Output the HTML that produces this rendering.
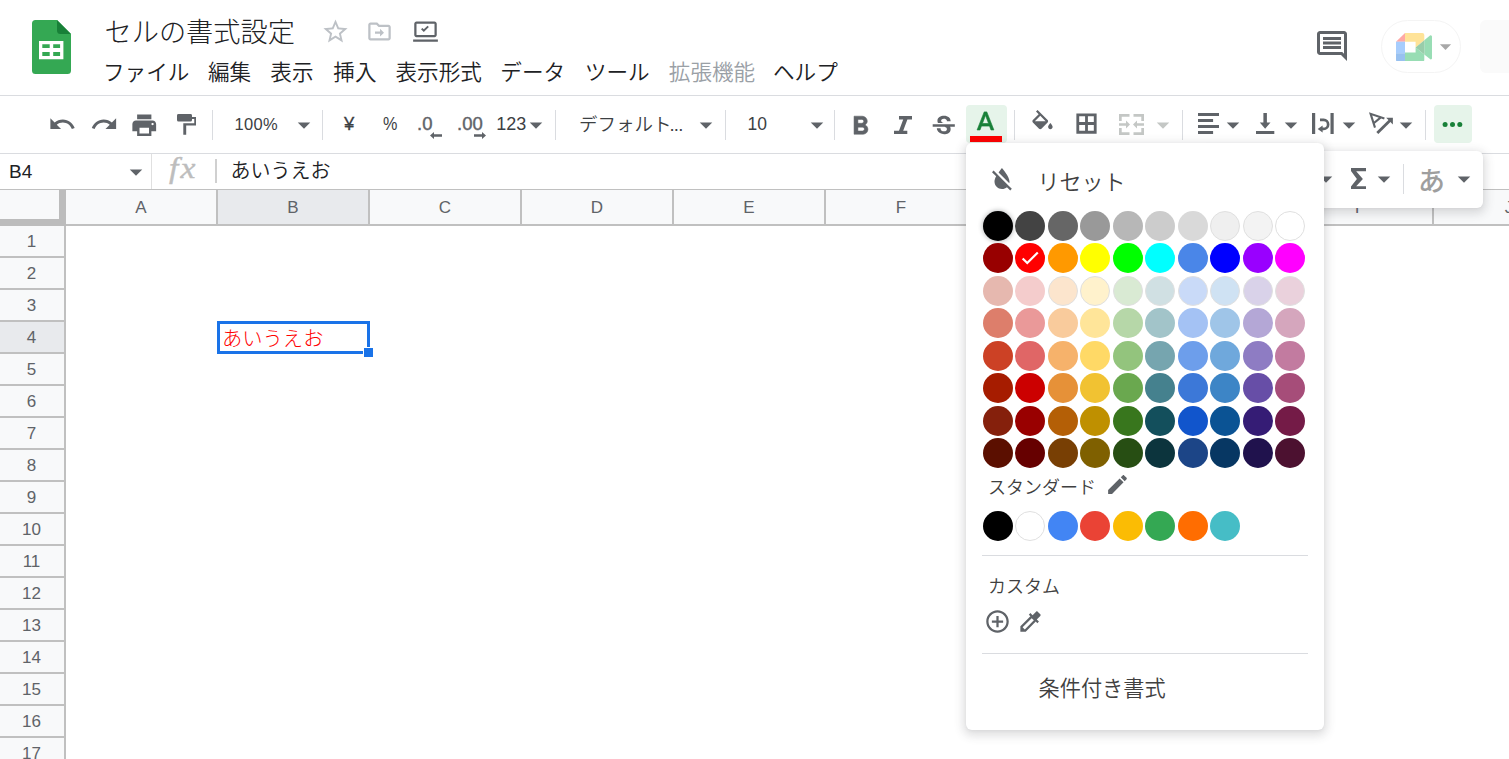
<!DOCTYPE html>
<html lang="ja"><head><meta charset="utf-8"><title>セルの書式設定</title>
<style>
html,body{margin:0;padding:0}
body{width:1509px;height:759px;overflow:hidden;position:relative;background:#fff;font-family:"Liberation Sans","Noto Sans CJK JP",sans-serif;color:#202124}
.abs,.ic,.t{position:absolute}
.t{white-space:nowrap;line-height:1}
.sep{position:absolute;width:1px;background:#dadce0}
.colh{position:absolute;top:190px;height:34px;background:#f8f9fa;border-right:2px solid #c0c0c0;box-sizing:border-box;text-align:center;font-size:17px;line-height:35px;color:#5f6368}
.rowh{position:absolute;left:0;width:65px;padding-right:2px;background:#f8f9fa;border-bottom:2px solid #c0c0c0;box-sizing:border-box;text-align:center;font-size:17px;color:#5f6368}
.sw{position:absolute;width:30px;height:30px;border-radius:50%;box-sizing:border-box}
</style></head><body>

<!-- header -->
<svg class="ic" style="left:32px;top:20px" width="39" height="54" viewBox="0 0 39 54">
<path d="M3.5 0H25L39 14V50.5A3.5 3.5 0 0 1 35.5 54H3.5A3.5 3.5 0 0 1 0 50.500V3.5A3.5 3.5 0 0 1 3.5 0z" fill="#34a853"/>
<path d="M25 0L39 14H28.5A3.5 3.5 0 0 1 25 10.5z" fill="#188038"/>
<path d="M7 20.900v18.300h24.400V20.900zm3.300 3.300h7.400v3.900h-7.400zm10.900 0h6.900v3.900h-6.900zm-10.900 7.900h7.400v3.900h-7.400zm10.900 0h6.900v3.900h-6.900z" fill="#fff"/>
</svg>
<div class="t" style="left:104.500px;top:19px;font-size:27.200px;color:#202124;font-weight:300">セルの書式設定</div>
<svg class="ic" style="left:321px;top:17px" width="29" height="29" viewBox="0 0 24 24" fill="#bdc1c6" ><path d="M22 9.24l-7.19-.62L12 2 9.19 8.63 2 9.24l5.46 4.73L5.82 21 12 17.27 18.18 21l-1.63-7.03L22 9.24zM12 15.4l-3.76 2.27 1-4.28-3.32-2.88 4.38-.38L12 6.1l1.71 4.04 4.38.38-3.32 2.88 1 4.28L12 15.4z"/></svg>
<svg class="ic" style="left:366px;top:18px" width="27" height="27" viewBox="0 0 24 24" fill="#bdc1c6"><path d="M20 6h-8l-2-2H4c-1.100 0-2 .900-2 2v12c0 1.100.900 2 2 2h16c1.100 0 2-.900 2-2V8c0-1.100-.900-2-2-2zm0 12H4V6h5.170l2 2H20v10zm-7.500-1.500l3.500-3.500-3.500-3.500v2.500H8v2h4.500v2.500z"/></svg>
<svg class="ic" style="left:412px;top:18px" width="27" height="27" viewBox="0 0 24 24" fill="#5f6368"><path d="M1 19h22v2H1zM20 3H4c-1.100 0-2 .900-2 2v10c0 1.100.900 2 2 2h16c1.100 0 2-.900 2-2V5c0-1.100-.900-2-2-2zm0 12H4V5h16v10zm-9.500-2.500l-2.500-2.500 1.200-1.200 1.300 1.300 3.300-3.300 1.200 1.200z"/></svg>
<div class="t" style="left:103px;top:62px;font-size:21.600px;color:#202124;font-weight:350">ファイル</div>
<div class="t" style="left:208px;top:62px;font-size:21.600px;color:#202124;font-weight:350">編集</div>
<div class="t" style="left:270.3px;top:62px;font-size:21.600px;color:#202124;font-weight:350">表示</div>
<div class="t" style="left:333.3px;top:62px;font-size:21.600px;color:#202124;font-weight:350">挿入</div>
<div class="t" style="left:395.5px;top:62px;font-size:21.600px;color:#202124;font-weight:350">表示形式</div>
<div class="t" style="left:500.3px;top:62px;font-size:21.600px;color:#202124;font-weight:350">データ</div>
<div class="t" style="left:584.8px;top:62px;font-size:21.600px;color:#202124;font-weight:350">ツール</div>
<div class="t" style="left:668.8px;top:62px;font-size:21.600px;color:#9aa0a6;font-weight:350">拡張機能</div>
<div class="t" style="left:773px;top:62px;font-size:21.600px;color:#202124;font-weight:350">ヘルプ</div>
<svg class="ic" style="left:1314px;top:28px" width="36" height="36" viewBox="0 0 24 24" fill="#5f6368" ><path d="M20 4v13.17L18.83 16H4V4h16m0-2H4c-1.1 0-2 .9-2 2v12c0 1.1.9 2 2 2h14l4 4V4c0-1.1-.9-2-2-2zm-2 10H6v2h12v-2zm0-3H6v2h12V9zm0-3H6v2h12V6z"/></svg>
<div class="abs" style="left:1381px;top:20px;width:80px;height:53px;border-radius:27px;border:1px solid #f4f4f4;box-sizing:border-box;background:#fff"></div>
<svg class="ic" style="left:1396px;top:32.600px" width="36" height="28.700" viewBox="0 0 36 28.700" opacity="0.4">
<path d="M0 8.700L9 0v8.700z" fill="#ff2820"/>
<path d="M9 0h17.300a2 2 0 0 1 2 2v5.300L19.600 14.400V8.700H9z" fill="#ffba00"/>
<path d="M0 8.700h9v11.600H0z" fill="#2684fc"/>
<path d="M0 20.300h9v8.400H2a2 2 0 0 1-2-2z" fill="#0066da"/>
<path d="M9 19.600h10.600v-5.200l8.700 7.100v5.200a2 2 0 0 1-2 2H9z" fill="#00ac47"/>
<path d="M28.300 7.300l5.700-4.700a1.200 1.200 0 0 1 2 .900v21.700a1.200 1.200 0 0 1-2 .900l-5.700-4.700z" fill="#00ac47"/>
<path d="M19.600 14.400l8.700-7.100v14.200z" fill="#00832d"/>
</svg>
<svg class="ic" style="left:1431.6px;top:32.7375px" width="27" height="27" viewBox="0 0 24 24" fill="#a8a8a8" ><path d="M7 10l5 5 5-5z"/></svg>
<div class="abs" style="left:1479.500px;top:20px;width:40px;height:53px;border-radius:6px;background:#fafafa"></div>
<div class="abs" style="left:0;top:95px;width:1509px;height:1px;background:#dadce0"></div>
<!-- toolbar -->
<svg class="ic" style="left:47.9px;top:110.3px" width="28.5" height="28.5" viewBox="0 0 24 24" fill="#5f6368" ><path d="M12.5 8c-2.65 0-5.05.99-6.9 2.6L2 7v9h9l-3.62-3.62c1.39-1.16 3.16-1.88 5.12-1.88 3.54 0 6.55 2.31 7.6 5.5l2.37-.78C21.08 11.03 17.15 8 12.5 8z"/></svg>
<svg class="ic" style="left:89.5px;top:110.3px" width="28.5" height="28.5" viewBox="0 0 24 24" fill="#5f6368" ><path d="M18.4 10.6C16.55 8.99 14.15 8 11.5 8c-4.65 0-8.58 3.03-9.96 7.22L3.9 16c1.05-3.19 4.05-5.5 7.6-5.5 1.95 0 3.73.72 5.12 1.88L13 16h9V7l-3.6 3.6z"/></svg>
<svg class="ic" style="left:130.4px;top:110.6px" width="28.5" height="28.5" viewBox="0 0 24 24" fill="#5f6368" ><path d="M19 8H5c-1.66 0-3 1.34-3 3v6h4v4h12v-4h4v-6c0-1.66-1.34-3-3-3zm-3 11H8v-5h8v5zm3-7c-.55 0-1-.45-1-1s.45-1 1-1 1 .45 1 1-.45 1-1 1zm-1-9H6v4h12V3z"/></svg>
<svg class="ic" style="left:176.600px;top:114.100px" width="19.500" height="20.800" viewBox="0 0 19.500 20.800" fill="#5f6368"><path d="M1.500 0h12a1.500 1.500 0 0 1 1.500 1.500v4.400a1.500 1.500 0 0 1-1.500 1.500h-12a1.500 1.500 0 0 1-1.500-1.500v-4.400a1.500 1.500 0 0 1 1.500-1.500zM15 3h4.450v8.600H9.200v9.200H6.300V9.200h10.950V5H15z"/></svg>
<div class="sep" style="left:212px;top:110px;height:30px"></div>
<div class="sep" style="left:322px;top:110px;height:30px"></div>
<div class="sep" style="left:555px;top:110px;height:30px"></div>
<div class="sep" style="left:725px;top:110px;height:30px"></div>
<div class="sep" style="left:834px;top:110px;height:30px"></div>
<div class="sep" style="left:1014px;top:110px;height:30px"></div>
<div class="sep" style="left:1182px;top:110px;height:30px"></div>
<div class="sep" style="left:1425px;top:110px;height:30px"></div>
<div class="t" style="left:234.5px;top:116.3px;font-size:16.5px;color:#3c4043;letter-spacing:0.3px">100%</div>
<svg class="ic" style="left:289.0px;top:109.575px" width="30" height="30" viewBox="0 0 24 24" fill="#5f6368" ><path d="M7 10l5 5 5-5z"/></svg>
<div class="t" style="left:344px;top:115.1px;font-size:18.5px;color:#3c4043;-webkit-text-stroke:0.3px #3c4043">¥</div>
<div class="t" style="left:382.5px;top:114.8px;font-size:18px;color:#3c4043;transform:scaleX(0.9);transform-origin:0 0">%</div>
<div class="t" style="left:417px;top:115.1px;font-size:18.5px;color:#5f6368;-webkit-text-stroke:0.4px #5f6368">.0</div>
<div class="t" style="left:457px;top:115.1px;font-size:18.5px;color:#5f6368;-webkit-text-stroke:0.4px #5f6368">.00</div>
<svg class="ic" style="left:430px;top:131.800px" width="12" height="7" viewBox="0 0 12 7" fill="#5f6368"><path d="M4 0L0 3.500 4 7V4.700H12V2.300H4z"/></svg>
<svg class="ic" style="left:473.500px;top:131.800px" width="12" height="7" viewBox="0 0 12 7" fill="#5f6368"><path d="M8 0L12 3.500 8 7V4.700H0V2.300H8z"/></svg>
<div class="t" style="left:496.3px;top:114.8px;font-size:18px;color:#3c4043;">123</div>
<svg class="ic" style="left:521.0px;top:109.575px" width="30" height="30" viewBox="0 0 24 24" fill="#5f6368" ><path d="M7 10l5 5 5-5z"/></svg>
<div class="t" style="left:579px;top:115.5px;font-size:18.5px;color:#3c4043;font-weight:350">デフォルト<span style="letter-spacing:-0.8px;margin-left:-2px">...</span></div>
<svg class="ic" style="left:690.5px;top:109.575px" width="30" height="30" viewBox="0 0 24 24" fill="#5f6368" ><path d="M7 10l5 5 5-5z"/></svg>
<div class="t" style="left:747.5px;top:116px;font-size:17.5px;color:#3c4043;">10</div>
<svg class="ic" style="left:802.0px;top:109.575px" width="30" height="30" viewBox="0 0 24 24" fill="#5f6368" ><path d="M7 10l5 5 5-5z"/></svg>
<svg class="ic" style="left:845.4px;top:110.6px" width="31" height="31" viewBox="0 0 24 24" fill="#5f6368" stroke="#5f6368" stroke-width="0.4"><path d="M15.6 10.79c.97-.67 1.65-1.77 1.65-2.79 0-2.26-1.75-4-4-4H7v14h7.04c2.09 0 3.71-1.7 3.71-3.79 0-1.52-.86-2.82-2.15-3.42zM10 6.5h3c.83 0 1.5.67 1.5 1.5s-.67 1.5-1.5 1.5h-3v-3zm3.5 9H10v-3h3.5c.83 0 1.5.67 1.5 1.5s-.67 1.5-1.5 1.5z"/></svg>
<svg class="ic" style="left:893.600px;top:115.700px" width="18.300" height="18.300" viewBox="0 0 18.300 18.300" fill="#5f6368"><path d="M5 0H18.300V3.500H13.400L9.200 14.800H13.300V18.300H0V14.800H5L9.200 3.500H5z"/></svg>
<svg class="ic" style="left:929.2px;top:112.4px" width="29.5" height="29.5" viewBox="0 0 24 24" fill="#5f6368" ><path d="M6.85 7.08C6.85 4.37 9.45 3 12.24 3c1.64 0 3 .49 3.9 1.28.77.65 1.46 1.73 1.46 3.24h-3.01c0-.31-.05-.59-.15-.85-.29-.86-1.2-1.28-2.25-1.28-1.86 0-2.34 1.02-2.34 1.7 0 .48.25.88.74 1.21.38.25.77.48 1.41.7H7.39c-.21-.34-.54-.89-.54-1.92zM21 12v-2H3v2h9.62c1.15.45 1.96.75 1.96 1.97 0 1-.81 1.67-2.28 1.67-1.54 0-2.93-.54-2.93-2.51H6.4c0 .55.08 1.13.24 1.58.81 2.29 3.29 3.3 5.67 3.3 2.27 0 5.3-.89 5.3-4.05 0-.3-.01-1.16-.48-1.94H21V12z"/></svg>
<div class="abs" style="left:966px;top:105px;width:41px;height:38px;border-radius:4px;background:#e6f4ea"></div>
<svg class="ic" style="left:969.9px;top:107.9px" width="31" height="31" viewBox="0 0 24 24" fill="#188038" stroke="#188038" stroke-width="0.5"><path d="M11 3L5.5 17h2.25l1.12-3h6.25l1.12 3h2.25L13 3h-2zm-1.38 9L12 5.67 14.38 12H9.62z"/></svg>
<div class="abs" style="left:970px;top:136px;width:32px;height:6px;background:#ff0000"></div>
<svg class="ic" style="left:1029px;top:110px" width="27" height="27" viewBox="0 0 24 24" fill="#5f6368" ><path d="M16.56 8.94L7.62 0 6.21 1.41l2.38 2.38-5.15 5.15c-.59.59-.59 1.54 0 2.12l5.5 5.5c.29.29.68.44 1.06.44s.77-.15 1.06-.44l5.5-5.5c.59-.58.59-1.53 0-2.12zM5.21 10L10 5.21 14.79 10H5.21zM19 11.5s-2 2.17-2 3.5c0 1.1.9 2 2 2s2-.9 2-2c0-1.33-2-3.5-2-3.5z"/></svg>
<svg class="ic" style="left:1073px;top:110px" width="27" height="27" viewBox="0 0 24 24" fill="#5f6368"><path d="M3 3v18h18V3H3zm7.750 15.500H5.500v-5.250h5.250zm0-7.750H5.500V5.500h5.250zm7.750 7.750h-5.250v-5.250h5.250zm0-7.750h-5.250V5.500h5.250z"/></svg>
<svg class="ic" style="left:1119px;top:113.800px" width="25" height="21" viewBox="0 0 25 21" fill="#c4c7c5"><path d="M0 0h10.500v2.700H2.700v4.300H0zM14.500 0H25v7h-2.700V2.700h-7.800zM0 21h10.500v-2.700H2.700V14H0zM14.500 21H25v-7h-2.700v4.300h-7.800zM0 9.300h7V6.500l4 4-4 4v-2.800H0zM25 9.300h-7V6.500l-4 4 4 4v-2.800h7z"/></svg>
<svg class="ic" style="left:1148.3px;top:109.575px" width="30" height="30" viewBox="0 0 24 24" fill="#c4c7c5" ><path d="M7 10l5 5 5-5z"/></svg>
<svg class="ic" style="left:1197.500px;top:113px" width="21.200" height="21.200" viewBox="0 0 21.200 21.200" fill="#5f6368"><path d="M0 0h21.200v3.100H0zM0 6h15.100v3.100H0zM0 12h21.200v3.100H0zM0 18.100h15.100v3.100H0z"/></svg>
<svg class="ic" style="left:1218.4px;top:109.575px" width="30" height="30" viewBox="0 0 24 24" fill="#5f6368" ><path d="M7 10l5 5 5-5z"/></svg>
<svg class="ic" style="left:1256.300px;top:113px" width="18.300" height="21.300" viewBox="0 0 18.300 21.300" fill="#5f6368"><path d="M7.400 0h3.500v9.600h3.600l-5.350 6.100-5.350-6.100h3.600zM0 18.100h18.300v3.200H0z"/></svg>
<svg class="ic" style="left:1276.0px;top:109.575px" width="30" height="30" viewBox="0 0 24 24" fill="#5f6368" ><path d="M7 10l5 5 5-5z"/></svg>
<svg class="ic" style="left:1312.400px;top:112.900px" width="21.700" height="21" viewBox="0 0 21.700 21" fill="#5f6368"><path d="M0 0h3.200v21H0zM18.500 0h3.200v21h-3.200z"/><path d="M8 6.900H11.650a4.500 4.500 0 0 1 0 9H10" fill="none" stroke="#5f6368" stroke-width="2.700"/><path d="M5.700 15.900L10.600 12.400v7z"/></svg>
<svg class="ic" style="left:1333.5px;top:109.575px" width="30" height="30" viewBox="0 0 24 24" fill="#5f6368" ><path d="M7 10l5 5 5-5z"/></svg>
<svg class="ic" style="left:1360px;top:105px" width="60" height="35" viewBox="0 0 60 35" fill="#5f6368"><path d="M15 22.600L10.600 8.800 24.400 13.400M13.700 18.200L20.800 12.400" fill="none" stroke="#5f6368" stroke-width="2.100"/><path d="M17.300 28.100L31 14.400" fill="none" stroke="#5f6368" stroke-width="2.800"/><path d="M26.200 12.700h6.700v6.700z"/></svg>
<svg class="ic" style="left:1391.2px;top:109.575px" width="30" height="30" viewBox="0 0 24 24" fill="#5f6368" ><path d="M7 10l5 5 5-5z"/></svg>
<div class="abs" style="left:1434px;top:105px;width:38px;height:38px;border-radius:4px;background:#e6f4ea"></div>
<svg class="ic" style="left:1434px;top:105px" width="38" height="38" viewBox="0 0 38 38" fill="#188038"><circle cx="11.100" cy="19.600" r="2.500"/><circle cx="18.500" cy="19.600" r="2.500"/><circle cx="25.800" cy="19.600" r="2.500"/></svg>
<div class="abs" style="left:0;top:153px;width:1509px;height:1px;background:#dadce0"></div>
<!-- formula bar -->
<div class="t" style="left:9px;top:162px;font-size:19px;color:#202124;">B4</div>
<svg class="ic" style="left:121.4px;top:156.975px" width="30" height="30" viewBox="0 0 24 24" fill="#5f6368" ><path d="M7 10l5 5 5-5z"/></svg>
<div class="sep" style="left:151px;top:154px;height:35px;background:#e0e0e0"></div>
<div class="t" style="left:168.500px;top:153px;font-family:'Liberation Serif',serif;font-style:italic;font-size:30px;letter-spacing:2px;color:#bdbdbd;-webkit-text-stroke:0.4px #bdbdbd;transform:scaleX(1.12);transform-origin:0 0">fx</div>
<div class="sep" style="left:215px;top:159px;height:24px;width:2px;background:#d0d0d0"></div>
<div class="t" style="left:230.5px;top:161px;font-size:20px;color:#202124;font-weight:350">あいうえお</div>
<div class="abs" style="left:0;top:189px;width:1509px;height:1px;background:#c0c0c0"></div>
<!-- grid -->
<div class="abs" style="left:0;top:190px;width:1509px;height:34px;background:#f8f9fa"></div>
<div class="colh" style="left:66px;width:152px">A</div>
<div class="colh" style="left:218px;width:152px;background:#e8eaed">B</div>
<div class="colh" style="left:370px;width:152px">C</div>
<div class="colh" style="left:522px;width:152px">D</div>
<div class="colh" style="left:674px;width:152px">E</div>
<div class="colh" style="left:826px;width:152px">F</div>
<div class="colh" style="left:978px;width:152px">G</div>
<div class="colh" style="left:1130px;width:152px">H</div>
<div class="colh" style="left:1282px;width:152px">I</div>
<div class="colh" style="left:1434px;width:152px">J</div>
<div class="abs" style="left:0;top:224px;width:1509px;height:2px;background:#c0c0c0"></div>
<div class="abs" style="left:0;top:190px;width:66px;height:36px;background:#f8f9fa;border-right:7px solid #bcbcbc;border-bottom:7px solid #bcbcbc;box-sizing:border-box"></div>
<div class="rowh" style="top:226px;height:32px;line-height:31px">1</div>
<div class="rowh" style="top:258px;height:32px;line-height:31px">2</div>
<div class="rowh" style="top:290px;height:32px;line-height:31px">3</div>
<div class="rowh" style="top:322px;height:32px;line-height:31px;background:#e8eaed">4</div>
<div class="rowh" style="top:354px;height:32px;line-height:31px">5</div>
<div class="rowh" style="top:386px;height:32px;line-height:31px">6</div>
<div class="rowh" style="top:418px;height:32px;line-height:31px">7</div>
<div class="rowh" style="top:450px;height:32px;line-height:31px">8</div>
<div class="rowh" style="top:482px;height:32px;line-height:31px">9</div>
<div class="rowh" style="top:514px;height:32px;line-height:31px">10</div>
<div class="rowh" style="top:546px;height:32px;line-height:31px">11</div>
<div class="rowh" style="top:578px;height:32px;line-height:31px">12</div>
<div class="rowh" style="top:610px;height:32px;line-height:31px">13</div>
<div class="rowh" style="top:642px;height:32px;line-height:31px">14</div>
<div class="rowh" style="top:674px;height:32px;line-height:31px">15</div>
<div class="rowh" style="top:706px;height:32px;line-height:31px">16</div>
<div class="rowh" style="top:738px;height:32px;line-height:31px">17</div>
<div class="abs" style="left:64px;top:226px;width:2px;height:540px;background:#c0c0c0"></div>
<div class="abs" style="left:217px;top:321px;width:153px;height:33px;border:3px solid #1a73e8;box-sizing:border-box"></div>
<div class="t" style="left:222px;top:329px;font-size:20.300px;color:#ff0000;font-weight:300">あいうえお</div>
<div class="abs" style="left:363px;top:347px;width:10px;height:10px;background:#1a73e8;border:1px solid #fff;border-right:0;border-bottom:0;box-sizing:border-box"></div>
<!-- overflow toolbar -->
<div class="abs" style="left:1200px;top:151px;width:282.500px;height:57px;border-radius:6px;background:#fff;box-shadow:0 3px 10px 3px rgba(60,64,67,.16),0 1px 3px rgba(60,64,67,.06)"></div>
<svg class="ic" style="left:1311.4px;top:163.975px" width="30" height="30" viewBox="0 0 24 24" fill="#5f6368" ><path d="M7 10l5 5 5-5z"/></svg>
<svg class="ic" style="left:1351px;top:167.500px" width="15.100" height="21.400" viewBox="0 0 15.100 21.400" fill="#5f6368"><path d="M0 0H15.100V3.200H5.200L11.900 10.900 5.200 18.200H15.100V21.400H0V18.400L5.900 10.900 0 3z"/></svg>
<svg class="ic" style="left:1368.9px;top:163.975px" width="30" height="30" viewBox="0 0 24 24" fill="#5f6368" ><path d="M7 10l5 5 5-5z"/></svg>
<div class="sep" style="left:1403px;top:164px;height:30px"></div>
<div class="t" style="left:1418px;top:168.700px;font-size:27px;color:#9e9e9e;font-weight:500">あ</div>
<svg class="ic" style="left:1448.5px;top:163.975px" width="30" height="30" viewBox="0 0 24 24" fill="#5f6368" ><path d="M7 10l5 5 5-5z"/></svg>
<!-- colour picker -->
<div class="abs" style="left:966px;top:143px;width:358px;height:587px;border-radius:6px;background:#fff;box-shadow:0 3px 10px 3px rgba(60,64,67,.16),0 1px 3px rgba(60,64,67,.06)"></div>
<svg class="ic" style="left:987px;top:164.3px" width="30" height="30" viewBox="0 0 24 24" fill="#5f6368" ><path d="M18 14c0-4-6-10.8-6-10.8s-1.33 1.51-2.73 3.52l8.59 8.59c.09-.42.14-.86.14-1.31zm-.88 3.12L12.5 12.5 5.27 5.27 4 6.55l3.32 3.32C6.55 11.32 6 12.79 6 14c0 3.31 2.69 6 6 6 1.52 0 2.9-.57 3.96-1.5l2.63 2.63 1.27-1.27-2.74-2.74z"/></svg>
<div class="t" style="left:1037.5px;top:172px;font-size:22px;color:#404040;font-weight:350">リセット</div>
<div class="sw" style="left:983px;top:211px;background:#000000;box-shadow:0 0 4px 1px rgba(60,64,67,.3)"></div>
<div class="sw" style="left:1015px;top:211px;background:#434343"></div>
<div class="sw" style="left:1048px;top:211px;background:#666666"></div>
<div class="sw" style="left:1080px;top:211px;background:#999999"></div>
<div class="sw" style="left:1113px;top:211px;background:#b7b7b7"></div>
<div class="sw" style="left:1145px;top:211px;background:#cccccc"></div>
<div class="sw" style="left:1178px;top:211px;background:#d9d9d9"></div>
<div class="sw" style="left:1210px;top:211px;background:#efefef;border:1px solid #e0e0e0"></div>
<div class="sw" style="left:1243px;top:211px;background:#f3f3f3;border:1px solid #e0e0e0"></div>
<div class="sw" style="left:1275px;top:211px;background:#ffffff;border:1px solid #e0e0e0"></div>
<div class="sw" style="left:983px;top:243px;background:#980000"></div>
<div class="sw" style="left:1015px;top:243px;background:#ff0000"></div>
<div class="sw" style="left:1048px;top:243px;background:#ff9900"></div>
<div class="sw" style="left:1080px;top:243px;background:#ffff00"></div>
<div class="sw" style="left:1113px;top:243px;background:#00ff00"></div>
<div class="sw" style="left:1145px;top:243px;background:#00ffff"></div>
<div class="sw" style="left:1178px;top:243px;background:#4a86e8"></div>
<div class="sw" style="left:1210px;top:243px;background:#0000ff"></div>
<div class="sw" style="left:1243px;top:243px;background:#9900ff"></div>
<div class="sw" style="left:1275px;top:243px;background:#ff00ff"></div>
<div class="sw" style="left:983px;top:276px;background:#e6b8af"></div>
<div class="sw" style="left:1015px;top:276px;background:#f4cccc"></div>
<div class="sw" style="left:1048px;top:276px;background:#fce5cd;border:1px solid #e0e0e0"></div>
<div class="sw" style="left:1080px;top:276px;background:#fff2cc;border:1px solid #e0e0e0"></div>
<div class="sw" style="left:1113px;top:276px;background:#d9ead3;border:1px solid #e0e0e0"></div>
<div class="sw" style="left:1145px;top:276px;background:#d0e0e3;border:1px solid #e0e0e0"></div>
<div class="sw" style="left:1178px;top:276px;background:#c9daf8;border:1px solid #e0e0e0"></div>
<div class="sw" style="left:1210px;top:276px;background:#cfe2f3;border:1px solid #e0e0e0"></div>
<div class="sw" style="left:1243px;top:276px;background:#d9d2e9;border:1px solid #e0e0e0"></div>
<div class="sw" style="left:1275px;top:276px;background:#ead1dc;border:1px solid #e0e0e0"></div>
<div class="sw" style="left:983px;top:308px;background:#dd7e6b"></div>
<div class="sw" style="left:1015px;top:308px;background:#ea9999"></div>
<div class="sw" style="left:1048px;top:308px;background:#f9cb9c"></div>
<div class="sw" style="left:1080px;top:308px;background:#ffe599"></div>
<div class="sw" style="left:1113px;top:308px;background:#b6d7a8"></div>
<div class="sw" style="left:1145px;top:308px;background:#a2c4c9"></div>
<div class="sw" style="left:1178px;top:308px;background:#a4c2f4"></div>
<div class="sw" style="left:1210px;top:308px;background:#9fc5e8"></div>
<div class="sw" style="left:1243px;top:308px;background:#b4a7d6"></div>
<div class="sw" style="left:1275px;top:308px;background:#d5a6bd"></div>
<div class="sw" style="left:983px;top:341px;background:#cc4125"></div>
<div class="sw" style="left:1015px;top:341px;background:#e06666"></div>
<div class="sw" style="left:1048px;top:341px;background:#f6b26b"></div>
<div class="sw" style="left:1080px;top:341px;background:#ffd966"></div>
<div class="sw" style="left:1113px;top:341px;background:#93c47d"></div>
<div class="sw" style="left:1145px;top:341px;background:#76a5af"></div>
<div class="sw" style="left:1178px;top:341px;background:#6d9eeb"></div>
<div class="sw" style="left:1210px;top:341px;background:#6fa8dc"></div>
<div class="sw" style="left:1243px;top:341px;background:#8e7cc3"></div>
<div class="sw" style="left:1275px;top:341px;background:#c27ba0"></div>
<div class="sw" style="left:983px;top:373px;background:#a61c00"></div>
<div class="sw" style="left:1015px;top:373px;background:#cc0000"></div>
<div class="sw" style="left:1048px;top:373px;background:#e69138"></div>
<div class="sw" style="left:1080px;top:373px;background:#f1c232"></div>
<div class="sw" style="left:1113px;top:373px;background:#6aa84f"></div>
<div class="sw" style="left:1145px;top:373px;background:#45818e"></div>
<div class="sw" style="left:1178px;top:373px;background:#3c78d8"></div>
<div class="sw" style="left:1210px;top:373px;background:#3d85c6"></div>
<div class="sw" style="left:1243px;top:373px;background:#674ea7"></div>
<div class="sw" style="left:1275px;top:373px;background:#a64d79"></div>
<div class="sw" style="left:983px;top:406px;background:#85200c"></div>
<div class="sw" style="left:1015px;top:406px;background:#990000"></div>
<div class="sw" style="left:1048px;top:406px;background:#b45f06"></div>
<div class="sw" style="left:1080px;top:406px;background:#bf9000"></div>
<div class="sw" style="left:1113px;top:406px;background:#38761d"></div>
<div class="sw" style="left:1145px;top:406px;background:#134f5c"></div>
<div class="sw" style="left:1178px;top:406px;background:#1155cc"></div>
<div class="sw" style="left:1210px;top:406px;background:#0b5394"></div>
<div class="sw" style="left:1243px;top:406px;background:#351c75"></div>
<div class="sw" style="left:1275px;top:406px;background:#741b47"></div>
<div class="sw" style="left:983px;top:438px;background:#5b0f00"></div>
<div class="sw" style="left:1015px;top:438px;background:#660000"></div>
<div class="sw" style="left:1048px;top:438px;background:#783f04"></div>
<div class="sw" style="left:1080px;top:438px;background:#7f6000"></div>
<div class="sw" style="left:1113px;top:438px;background:#274e13"></div>
<div class="sw" style="left:1145px;top:438px;background:#0c343d"></div>
<div class="sw" style="left:1178px;top:438px;background:#1c4587"></div>
<div class="sw" style="left:1210px;top:438px;background:#073763"></div>
<div class="sw" style="left:1243px;top:438px;background:#20124d"></div>
<div class="sw" style="left:1275px;top:438px;background:#4c1130"></div>
<svg class="ic" style="left:1019px;top:247px" width="22" height="22" viewBox="0 0 24 24" fill="none" stroke="#fff" stroke-width="2.400"><path d="M4 12.500l5 5L20.500 6"/></svg>
<div class="t" style="left:988px;top:478.5px;font-size:18px;color:#404040;font-weight:350">スタンダード</div>
<svg class="ic" style="left:1105px;top:472px" width="25" height="25" viewBox="0 0 24 24" fill="#5f6368" ><path d="M3 17.25V21h3.75L17.81 9.94l-3.75-3.75L3 17.25zM20.71 7.04c.39-.39.39-1.02 0-1.41l-2.34-2.34c-.39-.39-1.02-.39-1.41 0l-1.83 1.83 3.75 3.75 1.83-1.83z"/></svg>
<div class="sw" style="left:983px;top:511px;background:#000000"></div>
<div class="sw" style="left:1015px;top:511px;background:#ffffff;border:1px solid #e0e0e0"></div>
<div class="sw" style="left:1048px;top:511px;background:#4285f4"></div>
<div class="sw" style="left:1080px;top:511px;background:#ea4335"></div>
<div class="sw" style="left:1113px;top:511px;background:#fbbc04"></div>
<div class="sw" style="left:1145px;top:511px;background:#34a853"></div>
<div class="sw" style="left:1178px;top:511px;background:#ff6d01"></div>
<div class="sw" style="left:1210px;top:511px;background:#46bdc6"></div>
<div class="abs" style="left:982px;top:555px;width:326px;height:1px;background:#dadce0"></div>
<div class="t" style="left:988px;top:577.5px;font-size:18px;color:#404040;font-weight:350">カスタム</div>
<svg class="ic" style="left:984px;top:608px" width="27" height="27" viewBox="0 0 24 24" fill="#5f6368" ><path d="M13 7h-2v4H7v2h4v4h2v-4h4v-2h-4V7zm-1-5C6.48 2 2 6.48 2 12s4.48 10 10 10 10-4.48 10-10S17.52 2 12 2zm0 18c-4.41 0-8-3.59-8-8s3.59-8 8-8 8 3.59 8 8-3.59 8-8 8z"/></svg>
<svg class="ic" style="left:1017px;top:608px" width="27" height="27" viewBox="0 0 24 24" fill="#5f6368" ><path d="M20.71 5.63l-2.34-2.34c-.39-.39-1.02-.39-1.41 0l-3.12 3.12-1.93-1.91-1.41 1.41 1.42 1.42L3 16.25V21h4.75l8.92-8.92 1.42 1.42 1.41-1.41-1.92-1.92 3.12-3.12c.4-.4.4-1.03.01-1.42zM6.92 19L5 17.08l8.06-8.06 1.92 1.92L6.92 19z"/></svg>
<div class="abs" style="left:982px;top:653px;width:326px;height:1px;background:#dadce0"></div>
<div class="t" style="left:1038.5px;top:678px;font-size:21.2px;color:#404040;font-weight:350">条件付き書式</div>
</body></html>
